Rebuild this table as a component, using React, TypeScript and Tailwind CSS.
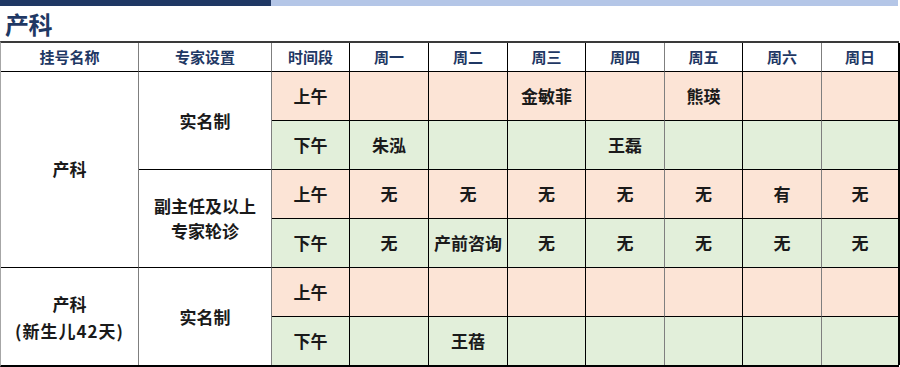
const days = ["周一", "周二", "周三", "周四", "周五", "周六", "周日"];

type Slot = { period: string; cells: string[] };

const slots: Slot[] = [
  { period: "上午", cells: ["", "", "金敏菲", "", "熊瑛", "", ""] },
  { period: "下午", cells: ["朱泓", "", "", "王磊", "", "", ""] },
  { period: "上午", cells: ["无", "无", "无", "无", "无", "有", "无"] },
  { period: "下午", cells: ["无", "产前咨询", "无", "无", "无", "无", "无"] },
  { period: "上午", cells: ["", "", "", "", "", "", ""] },
  { period: "下午", cells: ["", "王蓓", "", "", "", "", ""] },
];

// vertical divider colours follow the original sheet (some grey, some black)
const dayBorder = [
  "border-r-black",
  "border-r-black",
  "border-r-black",
  "border-r-[#7f7f7f]",
  "border-r-black",
  "border-r-[#7f7f7f]",
  "border-r-black border-r-2",
];

const rowStart = [
  "row-start-2",
  "row-start-3",
  "row-start-4",
  "row-start-5",
  "row-start-6",
  "row-start-7",
];

export default function App() {
  return (
    <div
      className="w-[900px] h-[367px] bg-white overflow-hidden"
      style={{ fontFamily: '"Noto Sans CJK SC", "Noto Sans", sans-serif' }}
    >
      <div className="flex h-[6px]">
        <div className="w-[271px] bg-[#1f3864]" />
        <div className="w-[627px] bg-[#b4c6e7]" />
      </div>
      <div className="h-[35px] flex items-center pl-[5px]">
        <h1 className="text-[24px] leading-none font-bold text-[#1f3864] tracking-[-0.5px]">产科</h1>
      </div>

      <div className="grid w-[899px] grid-cols-[138px_133px_78px_79px_79px_78px_79px_78px_79px_78px] grid-rows-[29px_49px_49px_49px_49px_49px_48px] border-t-2 border-t-[#3a3a3a] border-b-2 border-b-black border-l border-l-[#a6a6a6] text-[17px] font-bold text-[#1a1a1a]">
        {/* header */}
        <div className="flex items-center justify-center border-r border-r-[#7f7f7f] border-b border-b-black text-[15px] text-[#1f3864]">挂号名称</div>
        <div className="flex items-center justify-center border-r border-r-[#7f7f7f] border-b border-b-black text-[15px] text-[#1f3864]">专家设置</div>
        <div className="flex items-center justify-center border-r border-r-black border-b border-b-black text-[15px] text-[#1f3864]">时间段</div>
        {days.map((d, i) => (
          <div
            key={d}
            className={`flex items-center justify-center border-r border-b border-b-black text-[15px] text-[#1f3864] ${dayBorder[i]}`}
          >
            {d}
          </div>
        ))}

        {/* registration name column */}
        <div className="col-start-1 row-start-2 row-span-4 flex items-center justify-center border-r border-r-[#7f7f7f] border-b border-b-black pb-[2px]">
          产科
        </div>
        <div className="col-start-1 row-start-6 row-span-2 flex flex-col items-center justify-center border-r border-r-[#7f7f7f] leading-[27px]">
          <span>产科</span>
          <span className="tracking-[1px]">(新生儿42天)</span>
        </div>

        {/* expert column */}
        <div className="col-start-2 row-start-2 row-span-2 flex items-center justify-center border-r border-r-[#7f7f7f] border-b border-b-black">
          实名制
        </div>
        <div className="col-start-2 row-start-4 row-span-2 flex flex-col items-center justify-center border-r border-r-[#7f7f7f] border-b border-b-black leading-[25px] pb-[2px]">
          <span>副主任及以上</span>
          <span>专家轮诊</span>
        </div>
        <div className="col-start-2 row-start-6 row-span-2 flex items-center justify-center border-r border-r-[#7f7f7f]">
          实名制
        </div>

        {/* time slots */}
        {slots.map((s, r) => {
          const bg = s.period === "上午" ? "bg-[#fce4d6]" : "bg-[#e2efda]";
          const last = r === slots.length - 1;
          return [
            <div
              key={`p${r}`}
              className={`col-start-3 ${rowStart[r]} ${bg} flex items-center justify-center border-r border-r-black ${last ? "" : "border-b border-b-black"}`}
            >
              {s.period}
            </div>,
            ...s.cells.map((c, i) => (
              <div
                key={`c${r}-${i}`}
                className={`${rowStart[r]} ${bg} flex items-center justify-center border-r ${dayBorder[i]} ${last ? "" : "border-b border-b-black"}`}
              >
                {c}
              </div>
            )),
          ];
        })}
      </div>
    </div>
  );
}
